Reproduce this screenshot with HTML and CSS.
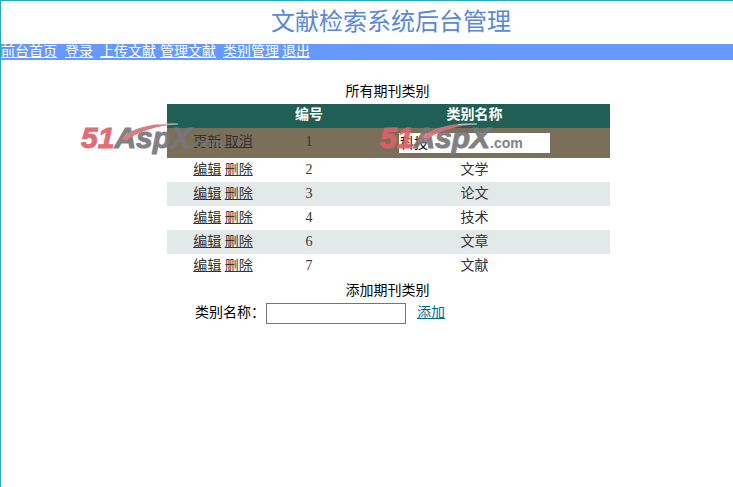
FILE: index.html
```html
<!DOCTYPE html>
<html lang="zh">
<head>
<meta charset="utf-8">
<title>文献检索系统后台管理</title>
<link rel="stylesheet" href="styles.css">
</head>
<body>
<div class="frame">
  <h1 class="title">文献检索系统后台管理</h1>
  <nav class="nav">
    <a href="#">前台首页</a>
    <a href="#" class="gap-8">登录</a>
    <a href="#" class="gap-7">上传文献</a>
    <a href="#" class="gap-4">管理文献</a>
    <a href="#" class="gap-7">类别管理</a>
    <a href="#" class="gap-3">退出</a>
  </nav>
  <main class="content">
    <div class="caption">所有期刊类别</div>
    <table class="grid">
      <thead>
        <tr><th class="c1"></th><th class="c2">编号</th><th class="c3">类别名称</th></tr>
      </thead>
      <tbody>
        <tr class="edit">
          <td><a href="#">更新</a> <a href="#">取消</a></td>
          <td>1</td>
          <td><input class="edit-input" type="text" value="科技"></td>
        </tr>
        <tr><td><a href="#">编辑</a> <a href="#">删除</a></td><td>2</td><td>文学</td></tr>
        <tr class="alt"><td><a href="#">编辑</a> <a href="#">删除</a></td><td>3</td><td>论文</td></tr>
        <tr><td><a href="#">编辑</a> <a href="#">删除</a></td><td>4</td><td>技术</td></tr>
        <tr class="alt"><td><a href="#">编辑</a> <a href="#">删除</a></td><td>6</td><td>文章</td></tr>
        <tr><td><a href="#">编辑</a> <a href="#">删除</a></td><td>7</td><td>文献</td></tr>
      </tbody>
    </table>
    <div class="add-title">添加期刊类别</div>
    <div class="add-row">
      <label class="add-label">类别名称：</label>
      <input class="add-input" type="text">
      <a href="#" class="add-link">添加</a>
    </div>
  </main>
</div>
<div class="mark mark-a">
  <svg class="swoosh" width="110" height="30" viewBox="0 0 110 30"><path d="M40 26 C52 14 72 10 97 11 C76 13 58 18 46 27 Z" fill="#d9707a"/><path d="M78 11.5 C84 11 90 11 97 11" stroke="#cfcfcf" stroke-width="1" fill="none"/></svg>
  <span class="mark-num">51</span><span class="mark-asp">AspX</span><span class="mark-com">.com</span>
</div>
<div class="mark mark-b">
  <svg class="swoosh" width="110" height="30" viewBox="0 0 110 30"><path d="M40 26 C52 14 72 10 97 11 C76 13 58 18 46 27 Z" fill="#d9707a"/><path d="M78 11.5 C84 11 90 11 97 11" stroke="#e4e4e4" stroke-width="1" fill="none"/></svg>
  <span class="mark-num">51</span><span class="mark-asp">AspX</span><span class="mark-com">.com</span>
</div>
</body>
</html>
```

FILE: styles.css
```css
* { box-sizing: border-box; }
html, body { margin: 0; padding: 0; height: 100%; background: #fff; overflow: hidden; }
body {
  font-family: "Liberation Serif", "Noto Sans CJK SC", serif;
  font-size: 14px;
  line-height: 16px;
  color: #000;
}
.frame {
  height: 487px;
  border-top: 1px solid #2ba6b8;
  border-left: 1px solid #2ba6b8;
}
.title {
  margin: 0;
  height: 43px;
  padding-left: 48px;
  font-size: 24px;
  font-weight: 400;
  line-height: 42px;
  text-align: center;
  color: #5a88dc;
}
.nav {
  display: flex;
  height: 16px;
  background: #6699ff;
  line-height: 15px;
}
.nav a { color: #fff; text-decoration: underline; }
.gap-8 { margin-left: 8px; }
.gap-7 { margin-left: 7px; }
.gap-4 { margin-left: 4px; }
.gap-3 { margin-left: 3px; }
.content { width: 443px; margin-left: 166px; padding-top: 22px; }
.caption { height: 22px; padding-right: 2px; line-height: 20px; text-align: center; }
.grid {
  width: 443px;
  border-collapse: collapse;
  table-layout: fixed;
  color: #333;
}
.grid th, .grid td { padding: 0; text-align: center; font-weight: 400; }
.grid th {
  height: 24px;
  padding-bottom: 2px;
  background: #1f5f55;
  color: #fff;
  font-weight: 700;
}
.c1 { width: 112px; }
.c2 { width: 60px; }
.grid td { height: 24px; }
.grid td a { color: #333; text-decoration: underline; }
.edit td { height: 30px; padding-bottom: 2px; background: #7b6f5a; }
.edit td:last-child { padding-bottom: 0; }
.alt td { background: #e3e8e9; }
.edit-input {
  display: block;
  width: 151px;
  height: 20px;
  margin: 0 auto;
  padding: 0 1px 3px;
  border: 0;
  background: #fff;
  font: inherit;
  color: #000;
}
.add-title { height: 25px; padding-right: 2px; line-height: 25px; text-align: center; }
.add-row { display: flex; align-items: center; padding-left: 28px; height: 21px; }
.add-label { width: 71px; padding-bottom: 1px; }
.add-input { width: 140px; height: 21px; padding: 0; border: 1px solid #767676; background: #fff; }
.add-link { margin-left: 11px; padding-bottom: 1px; color: #006c8c; text-decoration: underline; }
.mark {
  position: absolute;
  display: flex;
  align-items: baseline;
  height: 30px;
  font-family: "Liberation Sans", sans-serif;
  font-weight: 700;
  font-style: italic;
  line-height: 30px;
  white-space: nowrap;
  opacity: .92;
  pointer-events: none;
}
.mark-a { left: 81px; top: 123px; }
.mark-b { left: 380px; top: 123px; }
.swoosh { position: absolute; left: 0; top: -10px; }
.mark-num { font-size: 30px; color: #e0606a; -webkit-text-stroke: 1px #e0606a; }
.mark-asp { font-size: 30px; color: #77777b; -webkit-text-stroke: 1px #77777b; }
.mark-com { font-size: 14px; color: #77777b; font-style: normal; }
```
